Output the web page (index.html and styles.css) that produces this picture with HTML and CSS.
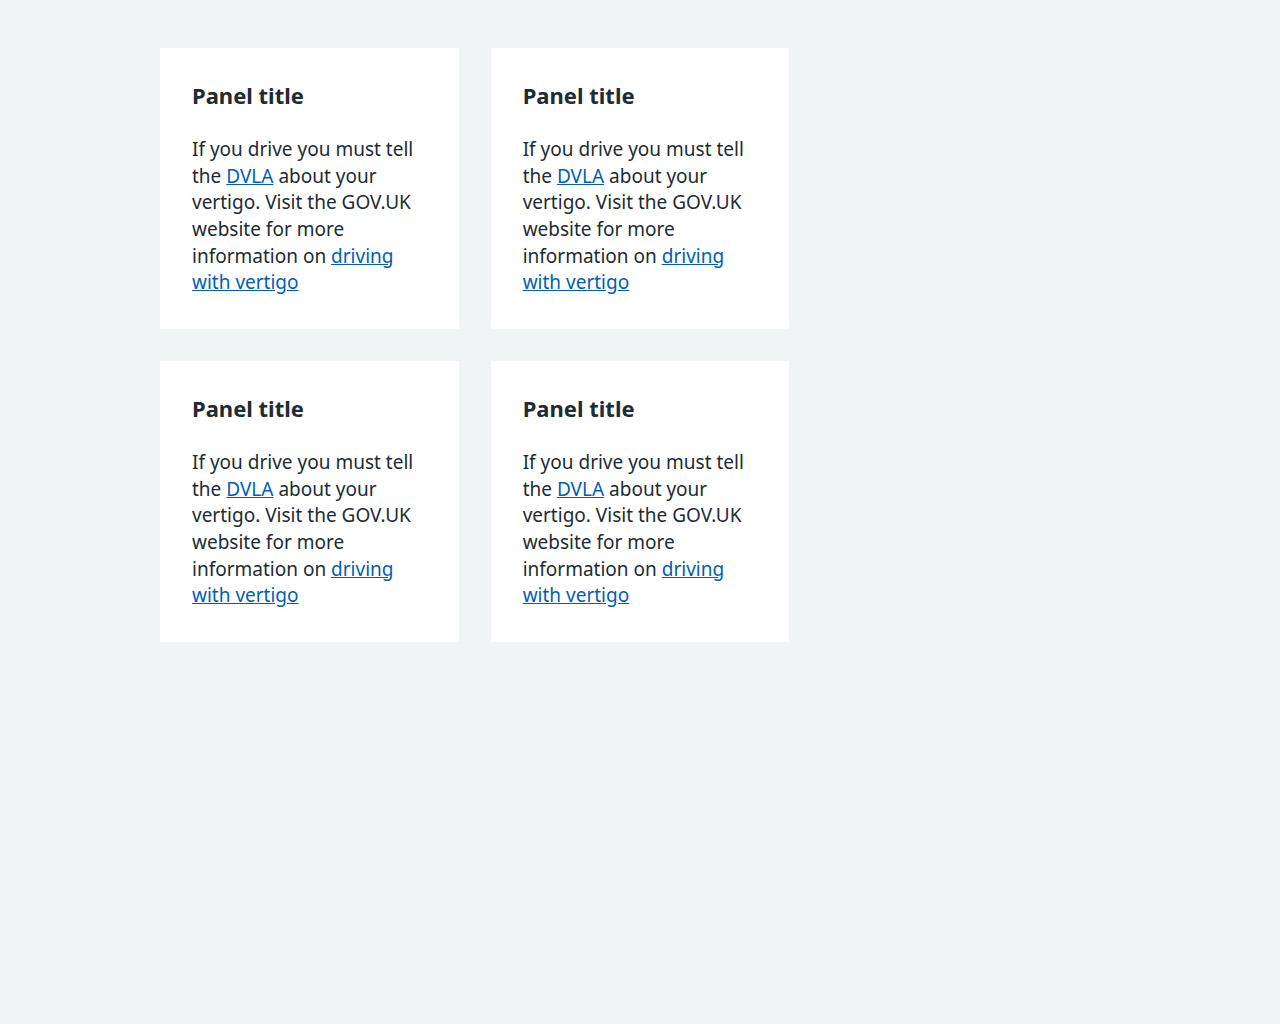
FILE: index.html
```html
<!DOCTYPE html>
<html lang="en">
<head>
<meta charset="utf-8">
<title>Panels</title>
<link rel="stylesheet" href="styles.css">
</head>
<body>
<div class="container">
  <div class="grid">
    <div class="panel">
      <h3 class="panel-title">Panel title</h3>
      <p class="panel-text">If you drive you must tell the <a href="#">DVLA</a> about your vertigo. Visit the GOV.UK website for more information on <a href="#">driving with vertigo</a></p>
    </div>
    <div class="panel">
      <h3 class="panel-title">Panel title</h3>
      <p class="panel-text">If you drive you must tell the <a href="#">DVLA</a> about your vertigo. Visit the GOV.UK website for more information on <a href="#">driving with vertigo</a></p>
    </div>
    <div class="spacer"></div>
    <div class="panel">
      <h3 class="panel-title">Panel title</h3>
      <p class="panel-text">If you drive you must tell the <a href="#">DVLA</a> about your vertigo. Visit the GOV.UK website for more information on <a href="#">driving with vertigo</a></p>
    </div>
    <div class="panel">
      <h3 class="panel-title">Panel title</h3>
      <p class="panel-text">If you drive you must tell the <a href="#">DVLA</a> about your vertigo. Visit the GOV.UK website for more information on <a href="#">driving with vertigo</a></p>
    </div>
  </div>
</div>
</body>
</html>
```
FILE: styles.css
```css
html, body {
  margin: 0;
  padding: 0;
}
body {
  background: #f0f4f5;
  color: #212b32;
  font-family: "Noto Sans", "Liberation Sans", Arial, sans-serif;
  min-height: 1024px;
}
.container {
  max-width: 960px;
  margin: 0 auto;
  padding-top: 48px;
}
.grid {
  display: grid;
  grid-template-columns: repeat(3, 1fr);
  column-gap: 32px;
  row-gap: 32px;
}
.panel {
  background: #ffffff;
  padding: 32px 32px 33px;
}
.panel-title {
  margin: 0 0 26px;
  font-size: 22px;
  line-height: 30px;
  font-weight: 700;
  color: #212b32;
}
.panel-text {
  margin: 0;
  font-size: 19px;
  line-height: 26.67px;
}
.panel-text a {
  color: #005eb8;
  text-decoration: underline;
}
```
